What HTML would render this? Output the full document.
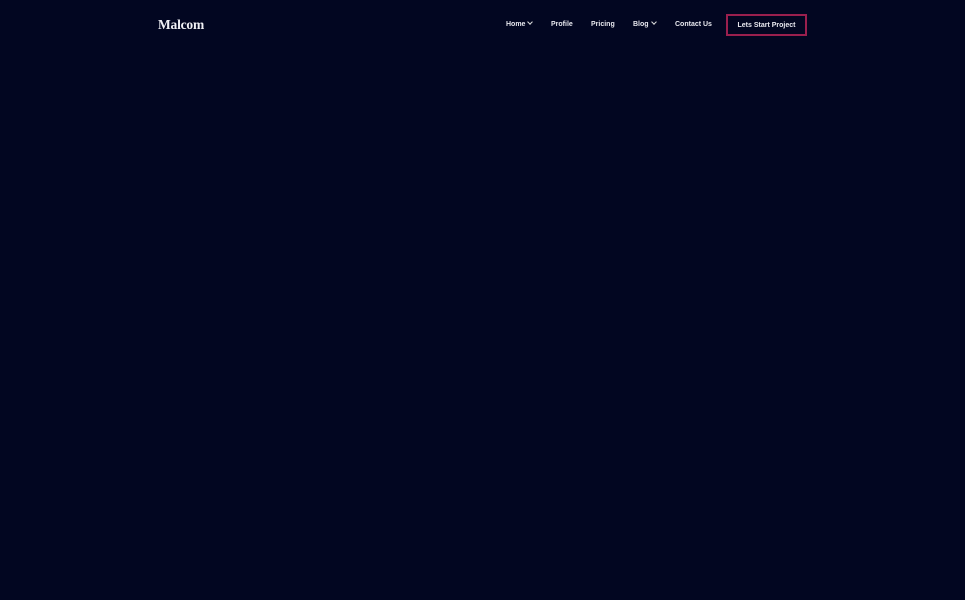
<!DOCTYPE html><html><head><style>
body{margin:0;width:965px;height:600px;background:#020621;font-family:"Liberation Sans",sans-serif;color:#fff;overflow:hidden;position:relative}
.logo{position:absolute;left:158px;top:17px;font-family:"Liberation Serif",serif;font-weight:bold;font-size:13.5px;letter-spacing:-0.2px;color:#f0f0f5}
.nav a{position:absolute;top:21px;font-size:7px;font-weight:bold;white-space:nowrap;color:#e8e8ef}
.btn{position:absolute;left:726px;top:14px;width:77px;height:18px;border:2px solid #9a1f4e;font-size:7px;font-weight:bold;text-align:center;line-height:20px;color:#e8e8ef}
.c{display:inline-block;width:3px;height:3px;border-right:1px solid #ddd;border-bottom:1px solid #ddd;transform:rotate(45deg);margin-left:3px;position:relative;top:-2px}
</style></head><body>
<div class="logo">Malcom</div>
<div class="nav">
<a style="left:506px">Home<span class="c"></span></a>
<a style="left:551px">Profile</a>
<a style="left:591px">Pricing</a>
<a style="left:633px">Blog<span class="c"></span></a>
<a style="left:675px">Contact Us</a>
</div>
<div class="btn">Lets Start Project</div>
</body></html>
